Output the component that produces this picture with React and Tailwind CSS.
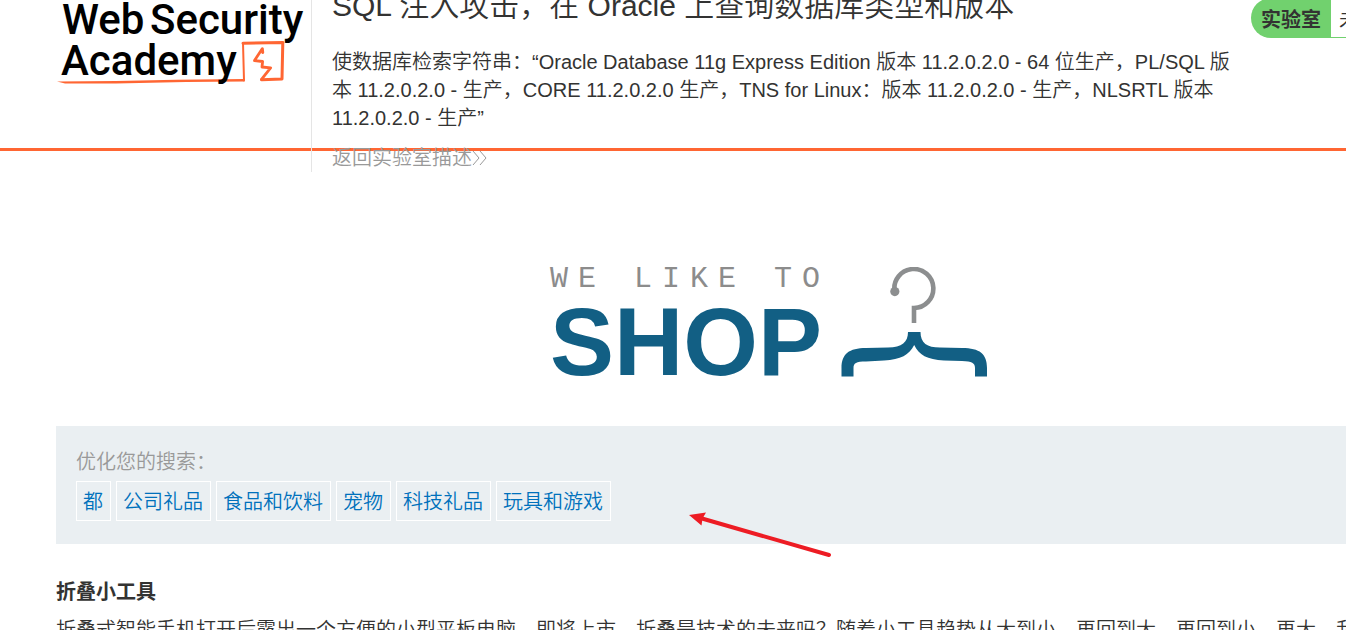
const filters = ['都', '公司礼品', '食品和饮料', '宠物', '科技礼品', '玩具和游戏'];

function AcademyLogo() {
  return (
    <svg
      className="block h-[86px] w-[255px] overflow-visible"
      viewBox="0 0 255 86"
      role="img"
      aria-label="Web Security Academy"
    >
      <g fill="none" stroke="#ff6633" strokeLinejoin="round" strokeLinecap="round">
        <path d="M187 43.3 L226.8 42.6 L226 79 L205.500 79.800" strokeWidth="3" />
        <path d="M187 43 L188 80.4" strokeWidth="2" />
        <path d="M205.500 79.300 L214.600 67.800 L206 67 L206.600 61.500 L198.500 60.600 L206.400 48.600 L206.800 52.500" strokeWidth="2.8" />
      </g>
      <path
        d="M1 81.5 L60 80.9 L120 79.7 L188.6 79 V81.4 L130 81.9 L60 83.6 L9 83.6 Z"
        fill="#ff6633"
      />
      <g className="font-[Roboto,sans-serif] text-[42px] font-medium" fill="#000">
        <text x="6" y="34">Web</text>
        <text x="94" y="34">Security</text>
        <text x="5" y="75">Academy</text>
      </g>
    </svg>
  );
}

function ShopLogo() {
  return (
    <div className="flex">
      <div className="w-[291px]">
        <p className="font-['Liberation_Mono',monospace] text-[30px] leading-8 tracking-[10px] whitespace-nowrap text-[#8c8c8c]">
          WE LIKE TO
        </p>
        <p className="text-[96px] leading-[94px] font-bold text-[#125f84]">SHOP</p>
      </div>
      <svg
        className="mt-1 block h-[111px] w-[147px]"
        viewBox="0 0 147 111"
        fill="none"
        aria-hidden="true"
      >
        <path d="M53.500 24 A19.500 19.500 0 1 1 73 41 V56" stroke="#8c8e8f" strokeWidth="4.6" />
        <circle cx="53.8" cy="24.6" r="4.6" fill="#8c8e8f" />
        <path
          d="M67 65 H79.500 C79.500 76 86 80.500 99 80.500 L121 81 C139 81 146 87 146 101 V109.500 H134 V101 C134 96 131 94.500 121 94 L103 93.500 C86 92.500 78 88 73.200 78 C68 88 60 92.500 43 93.500 L25 94.500 C15 94.500 12.500 96 12.500 101 V109.500 H0.500 V101 C0.500 87 8 81 25 81 L47 80.500 C61 80.500 67 75 67 65 Z"
          fill="#125f84"
        />
      </svg>
    </div>
  );
}

export default function App() {
  return (
    <div
      lang="zh-CN"
      className="relative h-screen overflow-hidden bg-white font-['Liberation_Sans','Noto_Sans_CJK_SC',sans-serif] text-[20px] leading-7 font-[350] text-[#333332]"
    >
      <header className="h-[151px] border-b-[3px] border-[#ff6633] pl-14">
        <div className="flex">
          <a href="#academy" className="w-[255px] shrink-0">
            <AcademyLogo />
          </a>
          <div className="min-w-0 flex-1 border-l border-[#e5e5e5] pr-5 pl-5">
            <h1 className="-mt-3 text-[30px] leading-9">
              SQL 注入攻击，在 Oracle 上查询数据库类型和版本
            </h1>
            <p className="mt-6">
              使数据库检索字符串：“Oracle Database 11g Express Edition 版本 11.2.0.2.0 - 64 位生产，PL/SQL 版本
              11.2.0.2.0 - 生产，CORE 11.2.0.2.0 生产，TNS for Linux：版本 11.2.0.2.0 - 生产，NLSRTL 版本
              11.2.0.2.0 - 生产”
            </p>
            <a href="#lab" className="mt-3 flex items-center text-[#999999]">
              返回实验室描述
              <svg className="h-4 w-4" viewBox="0 0 16 16" fill="none" stroke="currentColor" aria-hidden="true">
                <path d="M1 1 L7 8 L1 15 M8 1 L14 8 L8 15" />
              </svg>
            </a>
          </div>
          <div className="-mt-0.5 flex h-10 w-[95px] shrink-0 whitespace-nowrap">
            <p className="flex shrink-0 items-center rounded-l-[20px] bg-[#71d16e] px-2.5 pt-1 font-bold">
              实验室
            </p>
            <p className="flex shrink-0 items-center border-b border-[#71d16e] px-2 pt-1">未解决</p>
          </div>
        </div>
      </header>

      <main>
        <section className="flex justify-center pt-28 pl-48">
          <ShopLogo />
        </section>

        <section className="mt-[37px] ml-14 h-[118px] bg-[#eaeff2] px-5 pt-[22px]">
          <h2 className="text-[#999999]">优化您的搜索：</h2>
          <nav className="mt-[5px] flex gap-[5px]">
            {filters.map((name) => (
              <a
                key={name}
                href="#filter"
                className="flex h-10 items-center border border-white pt-0.5 pr-[7px] pl-1.5 whitespace-nowrap text-[#0071bc]"
              >
                {name}
              </a>
            ))}
          </nav>
        </section>

        <article className="mt-[34px] pl-14">
          <h3 className="font-bold">折叠小工具</h3>
          <p className="mt-2.5 whitespace-nowrap">
            折叠式智能手机打开后露出一个方便的小型平板电脑，即将上市。折叠是技术的未来吗？随着小工具趋势从大到小，再回到大，再回到小，再大，我
          </p>
        </article>
      </main>

      <svg
        className="pointer-events-none absolute top-[510px] left-[688px] h-12 w-36"
        viewBox="0 0 144 48"
        aria-hidden="true"
      >
        <path d="M14 8.500 L141 45" stroke="#ed1c24" strokeWidth="4" strokeLinecap="round" />
        <path d="M1 5 L18 2.500 L14.500 8.500 L13.500 15.500 Z" fill="#ed1c24" />
      </svg>
    </div>
  );
}
